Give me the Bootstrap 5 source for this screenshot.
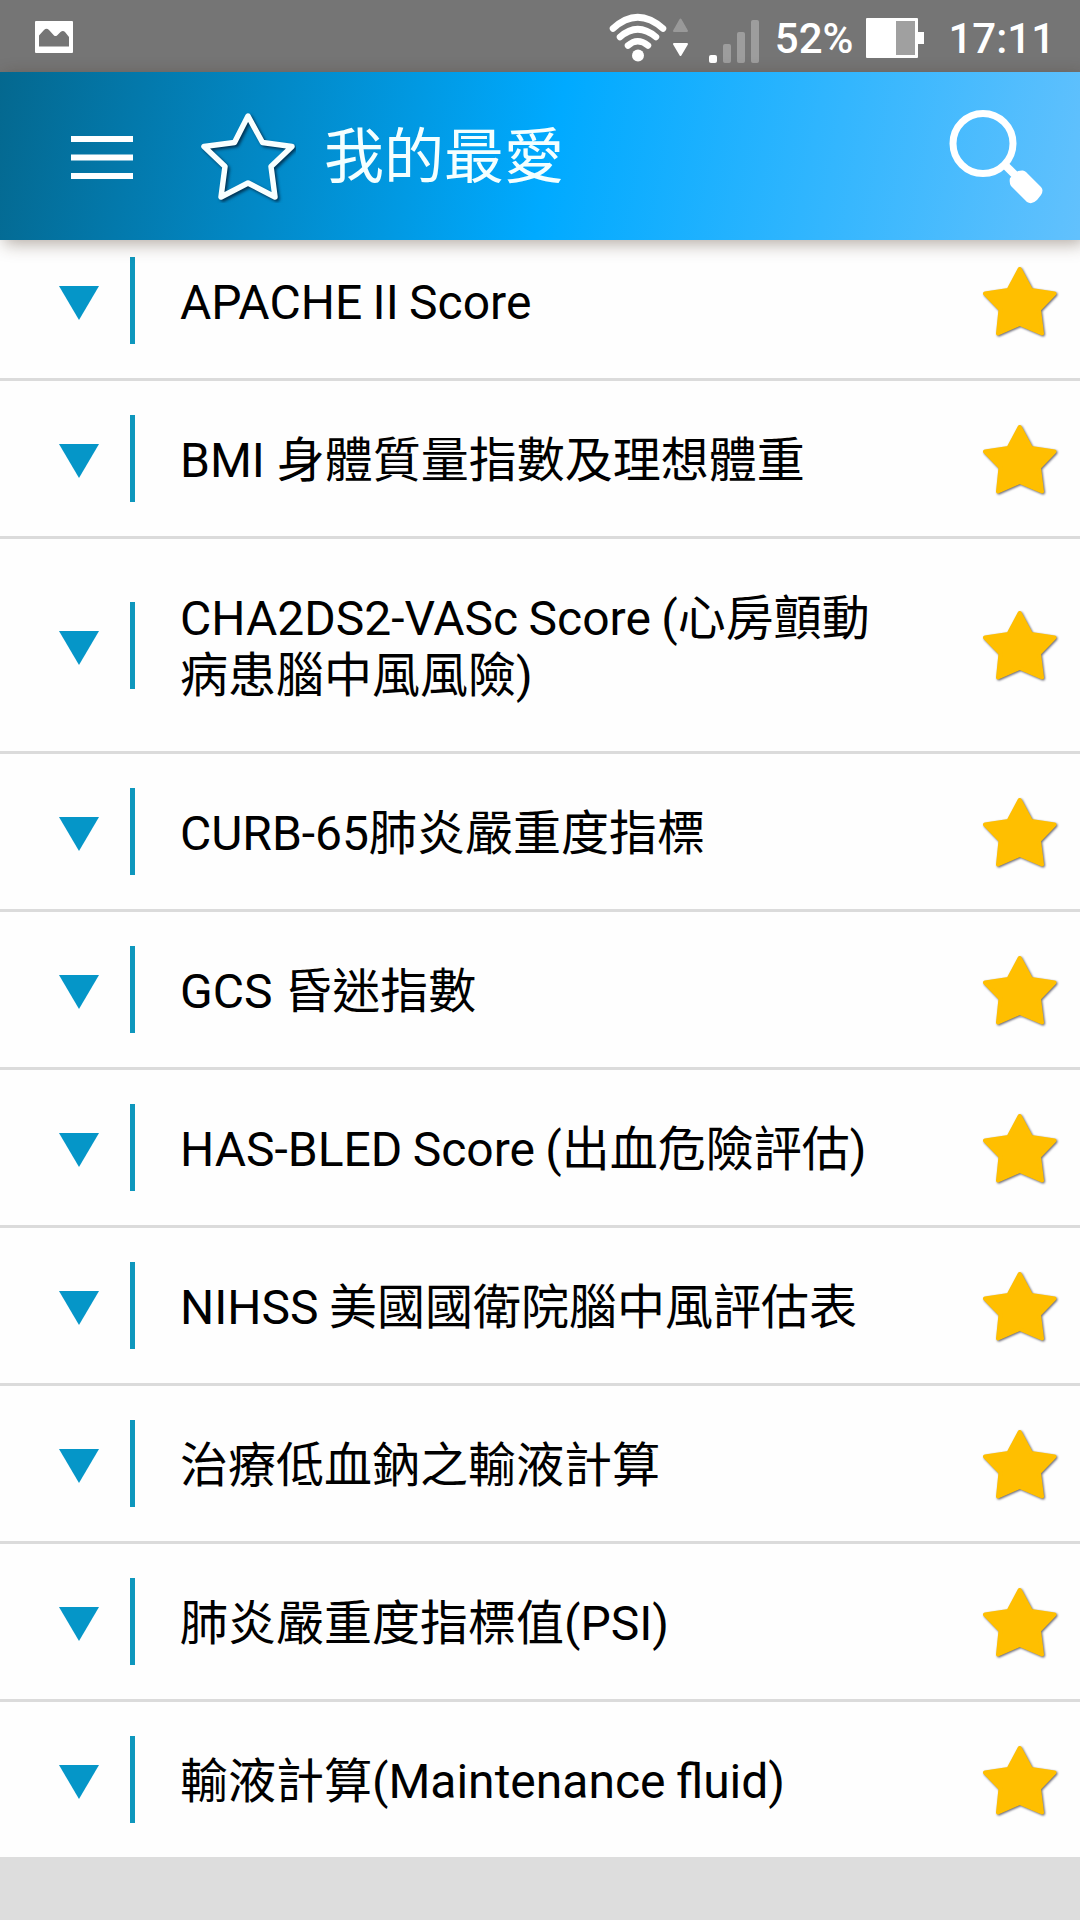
<!DOCTYPE html>
<html lang="zh-Hant">
<head>
<meta charset="utf-8">
<meta name="viewport" content="width=device-width, initial-scale=1">
<title>我的最愛</title>
<link href="https://cdn.jsdelivr.net/npm/bootstrap@5.3.0/dist/css/bootstrap.min.css" rel="stylesheet">
<style>
body{font-family:Roboto,"Noto Sans CJK TC",sans-serif;background:#ddd;color:#000;height:1920px;overflow:hidden}
svg{display:block;flex:none}
.status-bar{height:72px;background:#757575;color:#fff;padding:0 25px 0 34px;font-size:42px;font-weight:500;line-height:66px}
.status-bar span{padding-top:6px}
.status-photo{margin-top:2px}
.status-batt{margin-left:13px;margin-right:23px}
.app-bar{height:168px;padding:0 35px 0 71px;background:linear-gradient(101deg,#04688f 0%,#00aaff 51%,#62c1fd 100%);box-shadow:4px 4px 16px rgba(60,40,20,.38);z-index:2}
.app-menu{margin-top:4px}
.app-star{margin:2px 0 0 67px}
.app-title{font-size:60px;line-height:72px;margin:4px 0 0 28px;font-weight:400;color:#f4ffff}
.app-search{margin-top:2px}
.fav-list{margin-top:-17px}
.fav-list>.fav-row{min-height:158px;padding:0 20px 0 59px;border-width:0 0 3px;border-color:#dbdbdb;background:#fefefe;color:#000}
.fav-list>.fav-tall{min-height:215px}
.fav-list>.fav-row:last-child{border-width:0 0 3px;border-color:#ddd}
.fav-tri{margin-top:5px}
.fav-bar{width:5px;height:87px;background:#0e97bd;margin-left:31px;flex:none}
.fav-name{font-size:48px;line-height:57px;margin:4px 0 0 45px;width:710px}
.fav-snug{word-spacing:-1.5px}
</style>
</head>
<body>
<svg width="0" height="0" class="position-absolute">
<defs>
<symbol id="tri" viewBox="0 0 40 34"><path d="M0 0H40L20 34Z" fill="#0596c8"/></symbol>
<symbol id="gold" viewBox="0 0 80 76"><path d="M39.700 6 51 27 74.500 30.500 59 46.500 62 70.500 39.700 61 18 70.500 20.500 46.500 5 30.500 28.500 27Z" fill="#ffbf00" stroke="#ffbf00" stroke-width="4" stroke-linejoin="round" style="filter:drop-shadow(1px 1.500px .9px rgba(50,50,70,.75))"/></symbol>
</defs>
</svg>
<header class="status-bar d-flex align-items-center">
  <svg class="status-photo" width="40" height="34" viewBox="0 0 40 34"><rect x="1" y="1" width="38" height="32" rx="1" fill="#fff"/><path d="M5 26.500V15.500L10 10Q12.500 7.500 15 10L20 15.500Q21.500 16.500 23 15.500L26.500 12Q29 10 31 12L35 17V26.500Z" fill="#757575"/></svg>
  <svg class="ms-auto" width="152" height="72" viewBox="608 0 152 72">
    <g fill="none" stroke="#fff" stroke-width="6.500" stroke-linecap="round"><path d="M614 28.500Q638.500 6 664 28.500"/><path d="M621 37Q638.500 21.500 657 37"/><path d="M629 45.500Q638.500 37 649 45.500"/></g>
    <circle cx="639" cy="55.500" r="6" fill="#fff"/>
    <path d="M681.500 19.500 688 31H675Z" fill="#999" stroke="#999" stroke-width="2" stroke-linejoin="round"/>
    <path d="M681.500 55 688 44H675Z" fill="#fff" stroke="#fff" stroke-width="2" stroke-linejoin="round"/>
    <rect x="710" y="55" width="8" height="8" rx="2" fill="#fff"/>
    <g fill="#9d9d9d"><rect x="724" y="44" width="8" height="19" rx="2"/><rect x="738" y="32" width="8" height="31" rx="2"/><rect x="752" y="20" width="8" height="43" rx="2"/></g>
  </svg>
  <span class="ms-3">52%</span>
  <svg class="status-batt" width="59" height="72" viewBox="867 0 59 72"><path d="M868 18H918Q919 18 919 19V32H925V44H919V57Q919 58 918 58H868Q867 58 867 57V19Q867 18 868 18Z" fill="#fff"/><rect x="897" y="21" width="19" height="34" fill="#a0a0a0"/></svg>
  <span>17:11</span>
</header>
<nav class="app-bar d-flex align-items-center position-relative">
  <svg class="app-menu" width="62" height="44" viewBox="0 0 62 44" fill="#fff"><path d="M0 0H62V6H0ZM0 18.500H62V24.500H0ZM0 37H62V43H0Z"/></svg>
  <svg class="app-star" width="96" height="92" viewBox="200 112 96 92"><path d="M248 117 262.500 143.500 292 147.500 271 167.500 275 198 248 184 221 198 225 167.500 204 147.500 234.500 143.500Z" fill="none" stroke="#f8ffff" stroke-width="5.500" stroke-linejoin="round" style="filter:drop-shadow(2px 2px 1.500px rgba(0,25,50,.75))"/></svg>
  <h1 class="app-title">我的最愛</h1>
  <svg class="app-search ms-auto" width="98" height="98" viewBox="947 107 98 98"><circle cx="983" cy="142.500" r="30" fill="none" stroke="#fff" stroke-width="7"/><path d="M1004 163 1016 175" stroke="#fff" stroke-width="8"/><path d="M1018 170 1022 169.500Q1024 169 1026 171L1041 186Q1044 189 1041 194L1037 199Q1032 204 1027 201L1011 185Q1009 182 1010 177Z" fill="#fff"/></svg>
</nav>
<main class="list-group list-group-flush fav-list">
  <div class="list-group-item fav-row d-flex align-items-center"><svg class="fav-tri" width="40" height="34"><use href="#tri"/></svg><span class="fav-bar"></span><span class="fav-name fav-snug">APACHE II Score</span><svg class="ms-auto" width="80" height="76"><use href="#gold"/></svg></div>
  <div class="list-group-item fav-row d-flex align-items-center"><svg class="fav-tri" width="40" height="34"><use href="#tri"/></svg><span class="fav-bar"></span><span class="fav-name">BMI 身體質量指數及理想體重</span><svg class="ms-auto" width="80" height="76"><use href="#gold"/></svg></div>
  <div class="list-group-item fav-row fav-tall d-flex align-items-center"><svg class="fav-tri" width="40" height="34"><use href="#tri"/></svg><span class="fav-bar"></span><span class="fav-name fav-snug">CHA2DS2-VASc Score (心房顫動病患腦中風風險)</span><svg class="ms-auto" width="80" height="76"><use href="#gold"/></svg></div>
  <div class="list-group-item fav-row d-flex align-items-center"><svg class="fav-tri" width="40" height="34"><use href="#tri"/></svg><span class="fav-bar"></span><span class="fav-name">CURB-65肺炎嚴重度指標</span><svg class="ms-auto" width="80" height="76"><use href="#gold"/></svg></div>
  <div class="list-group-item fav-row d-flex align-items-center"><svg class="fav-tri" width="40" height="34"><use href="#tri"/></svg><span class="fav-bar"></span><span class="fav-name">GCS 昏迷指數</span><svg class="ms-auto" width="80" height="76"><use href="#gold"/></svg></div>
  <div class="list-group-item fav-row d-flex align-items-center"><svg class="fav-tri" width="40" height="34"><use href="#tri"/></svg><span class="fav-bar"></span><span class="fav-name fav-snug">HAS-BLED Score (出血危險評估)</span><svg class="ms-auto" width="80" height="76"><use href="#gold"/></svg></div>
  <div class="list-group-item fav-row d-flex align-items-center"><svg class="fav-tri" width="40" height="34"><use href="#tri"/></svg><span class="fav-bar"></span><span class="fav-name fav-snug">NIHSS 美國國衛院腦中風評估表</span><svg class="ms-auto" width="80" height="76"><use href="#gold"/></svg></div>
  <div class="list-group-item fav-row d-flex align-items-center"><svg class="fav-tri" width="40" height="34"><use href="#tri"/></svg><span class="fav-bar"></span><span class="fav-name">治療低血鈉之輸液計算</span><svg class="ms-auto" width="80" height="76"><use href="#gold"/></svg></div>
  <div class="list-group-item fav-row d-flex align-items-center"><svg class="fav-tri" width="40" height="34"><use href="#tri"/></svg><span class="fav-bar"></span><span class="fav-name">肺炎嚴重度指標值(PSI)</span><svg class="ms-auto" width="80" height="76"><use href="#gold"/></svg></div>
  <div class="list-group-item fav-row d-flex align-items-center"><svg class="fav-tri" width="40" height="34"><use href="#tri"/></svg><span class="fav-bar"></span><span class="fav-name fav-snug">輸液計算(Maintenance fluid)</span><svg class="ms-auto" width="80" height="76"><use href="#gold"/></svg></div>
</main>
<script src="https://cdn.jsdelivr.net/npm/bootstrap@5.3.0/dist/js/bootstrap.bundle.min.js"></script>
</body>
</html>
